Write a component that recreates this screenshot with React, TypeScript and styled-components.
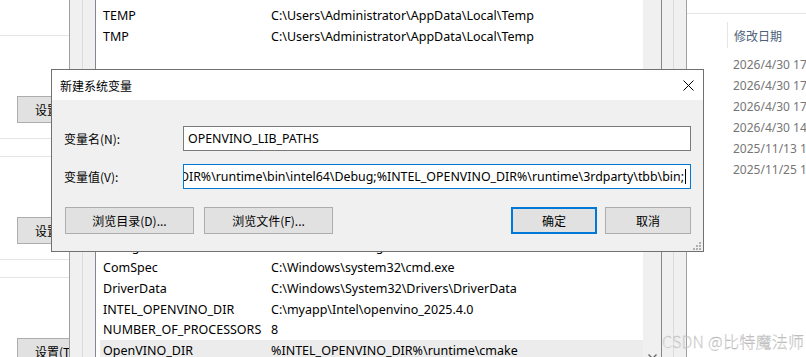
import React from 'react';
import styled, { createGlobalStyle } from 'styled-components';

const Global = createGlobalStyle`
  html, body { margin: 0; padding: 0; background: #fff; }
  body {
    width: 806px; height: 357px; overflow: hidden;
    font-family: "Noto Sans", "Noto Sans CJK SC", sans-serif;
    font-size: 12px; color: #000;
  }
  #root { width: 806px; height: 357px; }
`;

const Screen = styled.div`
  position: relative;
  width: 806px;
  height: 357px;
  overflow: hidden;
  display: flex;
`;

/* ---------- left (background) window ---------- */
const LeftPane = styled.div`
  width: 69px;
  flex: none;
  display: flex;
  flex-direction: column;
  background: #fff;
  overflow: hidden;
`;
const LeftTop = styled.div`
  flex: none;
  height: 35px;
  border-bottom: 1px solid #e5e5e5;
`;
const LeftSection = styled.div`
  flex: none;
  height: 103px;
  box-sizing: border-box;
  padding: 60px 0 0 17px;
  border-bottom: 1px solid #e5e5e5;
`;
const LeftSpacer = styled.div`
  flex: none;
  height: 18px;
  box-sizing: border-box;
  border-bottom: 1px solid #e5e5e5;
`;
const LeftButton = styled.div`
  width: 90px;
  height: 27px;
  box-sizing: border-box;
  background: #e1e1e1;
  border: 1px solid #adadad;
  display: flex;
  align-items: center;
  padding-left: 17px;
  white-space: nowrap;
  font-family: "Noto Sans CJK SC", sans-serif;
`;

/* ---------- environment-variables window ---------- */
const MidWindow = styled.div`
  width: 618px;
  flex: none;
  box-sizing: border-box;
  display: flex;
  background: #f0f0f0;
  border-left: 1px solid #a0a0a0;
  border-right: 1px solid #a0a0a0;
  padding: 0 12px;
`;
const GroupFrame = styled.div`
  flex: 1;
  display: flex;
  border-left: 1px solid #dcdcdc;
  border-right: 1px solid #dcdcdc;
  padding: 0 11px 0 12px;
  min-width: 0;
`;
const ListView = styled.div`
  flex: 1;
  display: flex;
  background: #fff;
  border-left: 1px solid #828790;
  border-right: 1px solid #828790;
  min-width: 0;
`;
const ListBody = styled.div`
  flex: 1;
  display: flex;
  flex-direction: column;
  padding: 5px 0 0 4px;
  overflow: hidden;
  min-width: 0;
`;
const RowGroup = styled.div<{ $gapTop?: number }>`
  flex: none;
  display: flex;
  flex-direction: column;
  margin-top: ${p => p.$gapTop ?? 0}px;
`;
const Row = styled.div<{ $h: number; $selected?: boolean }>`
  flex: none;
  display: flex;
  align-items: center;
  height: ${p => p.$h}px;
  padding-left: 3px;
  white-space: nowrap;
  background: ${p => (p.$selected ? '#ececec' : 'transparent')};
  font-size: 12.5px;
`;
const NameCell = styled.div`
  width: 168px;
  flex: none;
`;
const ValueCell = styled.div`
  flex: 1;
  overflow: hidden;
`;
const ScrollBar = styled.div`
  width: 18px;
  flex: none;
  background: #f0f0f0;
  display: flex;
  flex-direction: column;
  justify-content: flex-end;
  align-items: center;
  & svg { margin-bottom: -3px; }
`;

/* ---------- explorer window ---------- */
const Explorer = styled.div`
  flex: 1;
  min-width: 0;
  background: #fff;
  display: flex;
  flex-direction: column;
  overflow: hidden;
`;
const ExplorerTop = styled.div`
  flex: none;
  height: 13px;
  border-bottom: 1px solid #e5e5e5;
`;
const ColumnHeader = styled.div`
  flex: none;
  margin: 8px 0 0 40px;
  height: 26px;
  border-left: 1px solid #e5e5e5;
  padding-left: 6px;
  display: flex;
  align-items: center;
  white-space: nowrap;
  color: #4c607a;
  font-family: "Noto Sans CJK SC", sans-serif;
`;
const DateList = styled.div`
  flex: none;
  margin-top: 6px;
  padding-left: 46px;
  display: flex;
  flex-direction: column;
`;
const DateRow = styled.div`
  height: 21px;
  display: flex;
  align-items: center;
  white-space: nowrap;
  color: #767676;
  font-size: 12px;
`;

/* ---------- modal dialog ---------- */
const Dialog = styled.div`
  position: absolute;
  left: 51px;
  top: 69px;
  width: 653px;
  height: 183px;
  box-sizing: border-box;
  border: 1px solid #707070;
  background: #f0f0f0;
  display: flex;
  flex-direction: column;
`;
const TitleBar = styled.div`
  flex: none;
  height: 30px;
  background: #fff;
  display: flex;
  align-items: center;
  justify-content: space-between;
  padding: 0 9px 0 8px;
  font-family: "Noto Sans CJK SC", sans-serif;
`;
const DialogBody = styled.div`
  flex: 1;
  position: relative;
  padding: 26px 12px 0 12px;
  display: flex;
  flex-direction: column;
`;
const FieldRow = styled.div`
  display: grid;
  grid-template-columns: 119px 1fr;
  align-items: center;
  margin-bottom: 13px;
`;
const Label = styled.div`
  font-family: "Noto Sans CJK SC", sans-serif;
`;
const TextBox = styled.div<{ $focused?: boolean }>`
  height: 25px;
  min-width: 0;
  box-sizing: border-box;
  background: #fff;
  border: 1px solid ${p => (p.$focused ? '#0078d7' : '#7a7a7a')};
  padding: 0 4px;
  display: flex;
  align-items: center;
  justify-content: ${p => (p.$focused ? 'flex-end' : 'flex-start')};
  overflow: hidden;
  white-space: nowrap;
  font-size: 12.4px;
`;
const BoxText = styled.span`
  flex: none;
`;
const Caret = styled.span`
  flex: none;
  width: 1px;
  height: 15px;
  background: #000;
  margin-left: 1px;
`;
const ButtonRow = styled.div`
  margin-top: 5px;
  display: flex;
  justify-content: space-between;
  padding-left: 1px;
`;
const ButtonGroup = styled.div<{ $gap: number }>`
  display: flex;
  gap: ${p => p.$gap}px;
`;
const Button = styled.div<{ $w: number; $default?: boolean }>`
  width: ${p => p.$w}px;
  height: 27px;
  box-sizing: border-box;
  background: #e1e1e1;
  border: ${p => (p.$default ? '2px solid #0078d7' : '1px solid #adadad')};
  display: flex;
  align-items: center;
  justify-content: center;
  white-space: nowrap;
  font-family: "Noto Sans CJK SC", sans-serif;
`;
const Grip = styled.svg`
  position: absolute;
  right: 2px;
  bottom: 1px;
`;

const Watermark = styled.div`
  position: absolute;
  left: 662px;
  top: 329px;
  font-size: 16px;
  font-weight: 300;
  font-family: "Noto Sans CJK SC", sans-serif;
  color: rgba(236, 236, 236, 0.9);
  -webkit-text-stroke: 0.35px rgba(150, 150, 150, 0.7);
  white-space: nowrap;
  letter-spacing: 0.3px;
`;

const topRows = [
  ['TEMP', 'C:\\Users\\Administrator\\AppData\\Local\\Temp'],
  ['TMP', 'C:\\Users\\Administrator\\AppData\\Local\\Temp'],
];
const bottomRows = [
  ['configsetroot', 'C:\\Windows\\ConfigSetRoot'],
  ['ComSpec', 'C:\\Windows\\system32\\cmd.exe'],
  ['DriverData', 'C:\\Windows\\System32\\Drivers\\DriverData'],
  ['INTEL_OPENVINO_DIR', 'C:\\myapp\\Intel\\openvino_2025.4.0'],
  ['NUMBER_OF_PROCESSORS', '8'],
  ['OpenVINO_DIR', '%INTEL_OPENVINO_DIR%\\runtime\\cmake'],
];
const dates = [
  '2026/4/30 17:25',
  '2026/4/30 17:25',
  '2026/4/30 17:24',
  '2026/4/30 14:02',
  '2025/11/13 10:11',
  '2025/11/25 16:40',
];

export default function App() {
  return (
    <>
      <Global />
      <Screen>
        <LeftPane>
          <LeftTop />
          <LeftSection>
            <LeftButton>设置(E)...</LeftButton>
          </LeftSection>
          <LeftSpacer />
          <LeftSection>
            <LeftButton>设置(S)...</LeftButton>
          </LeftSection>
          <LeftSpacer />
          <LeftSection>
            <LeftButton>设置(T)...</LeftButton>
          </LeftSection>
        </LeftPane>

        <MidWindow>
          <GroupFrame>
            <ListView>
              <ListBody>
                <RowGroup>
                  {topRows.map(([n, v]) => (
                    <Row key={n} $h={21}>
                      <NameCell>{n}</NameCell>
                      <ValueCell>{v}</ValueCell>
                    </Row>
                  ))}
                </RowGroup>
                <RowGroup $gapTop={189.5}>
                  {bottomRows.map(([n, v], i) => (
                    <Row key={n} $h={20.75} $selected={i === bottomRows.length - 1}>
                      <NameCell>{n}</NameCell>
                      <ValueCell>{v}</ValueCell>
                    </Row>
                  ))}
                </RowGroup>
              </ListBody>
              <ScrollBar>
                <svg width="9" height="6" viewBox="0 0 9 6">
                  <path d="M0.5 0.5 L4.5 4.5 L8.5 0.5" fill="none" stroke="#606060" strokeWidth="1.3" />
                </svg>
              </ScrollBar>
            </ListView>
          </GroupFrame>
        </MidWindow>

        <Explorer>
          <ExplorerTop />
          <ColumnHeader>修改日期</ColumnHeader>
          <DateList>
            {dates.map((d, i) => (
              <DateRow key={i}>{d}</DateRow>
            ))}
          </DateList>
        </Explorer>

        <Dialog>
          <TitleBar>
            <span>新建系统变量</span>
            <svg width="11" height="11" viewBox="0 0 11 11">
              <path d="M0.5 0.5 L10.5 10.5 M10.5 0.5 L0.5 10.5" stroke="#000" strokeWidth="1" />
            </svg>
          </TitleBar>
          <DialogBody>
            <FieldRow>
              <Label>变量名(N):</Label>
              <TextBox>
                <BoxText>OPENVINO_LIB_PATHS</BoxText>
              </TextBox>
            </FieldRow>
            <FieldRow>
              <Label>变量值(V):</Label>
              <TextBox $focused>
                <BoxText>
                  %INTEL_OPENVINO_DIR%\runtime\bin\intel64\Debug;%INTEL_OPENVINO_DIR%\runtime\3rdparty\tbb\bin;
                </BoxText>
                <Caret />
              </TextBox>
            </FieldRow>
            <ButtonRow>
              <ButtonGroup $gap={10}>
                <Button $w={129}>浏览目录(D)...</Button>
                <Button $w={129}>浏览文件(F)...</Button>
              </ButtonGroup>
              <ButtonGroup $gap={8}>
                <Button $w={86} $default>确定</Button>
                <Button $w={86}>取消</Button>
              </ButtonGroup>
            </ButtonRow>
            <Grip width="8" height="8" viewBox="0 0 8 8">
              <g fill="#b0b0b0">
                <rect x="6" y="0" width="2" height="2" />
                <rect x="3" y="3" width="2" height="2" />
                <rect x="6" y="3" width="2" height="2" />
                <rect x="0" y="6" width="2" height="2" />
                <rect x="3" y="6" width="2" height="2" />
                <rect x="6" y="6" width="2" height="2" />
              </g>
            </Grip>
          </DialogBody>
        </Dialog>

        <Watermark>CSDN @比特魔法师</Watermark>
      </Screen>
    </>
  );
}
